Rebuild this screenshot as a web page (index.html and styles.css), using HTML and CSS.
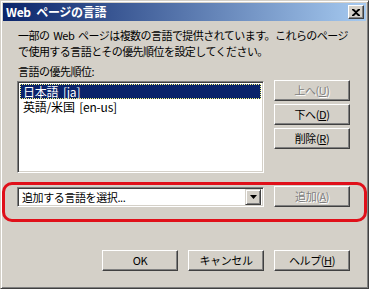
FILE: index.html
```html
<!DOCTYPE html>
<html lang="ja">
<head>
<meta charset="utf-8">
<title>Web ページの言語</title>
<link rel="stylesheet" href="styles.css">
</head>
<body>
<div class="dialog">
  <div class="titlebar">
    <span class="title">Web ページの言語</span>
    <span class="close"><svg width="8" height="7" viewBox="0 0 8 7"><path d="M0 0h2l2 2 2-2h2v1L5 3.5 8 6v1H6L4 5 2 7H0V6l3-2.5L0 1z" fill="#000"/></svg></span>
  </div>
  <div class="content">
    <p class="desc">一部の Web ページは複数の言語で提供されています。これらのページ<br>で使用する言語とその優先順位を設定してください。</p>
    <div class="label">言語の優先順位:</div>
    <div class="main">
      <div class="listbox">
        <div class="item selected"><span>日本語 [ja]</span></div>
        <div class="item"><span>英語/米国 [en-us]</span></div>
      </div>
      <div class="side">
        <button class="btn disabled">上へ(<u>U</u>)</button>
        <button class="btn">下へ(<u>D</u>)</button>
        <button class="btn">削除(<u>R</u>)</button>
      </div>
    </div>
    <div class="addrow">
      <div class="combo">
        <span class="combo-text">追加する言語を選択...</span>
        <span class="combo-arrow"><svg width="7" height="4" viewBox="0 0 7 4"><path d="M0 0h7L3.5 4z" fill="#000"/></svg></span>
      </div>
      <button class="btn disabled">追加(<u>A</u>)</button>
    </div>
    <div class="footer">
      <button class="btn">OK</button>
      <button class="btn">キャンセル</button>
      <button class="btn">ヘルプ(<u>H</u>)</button>
    </div>
  </div>
  <div class="highlight"></div>
</div>
</body>
</html>
```
FILE: styles.css
```css
html, body {
  margin: 0;
  padding: 0;
  background: #d4d0c8;
}
body {
  font-family: "Noto Sans CJK JP", "DejaVu Sans", sans-serif;
  font-size: 11px;
  color: #000;
}
.dialog {
  position: relative;
  width: 369px;
  height: 289px;
  box-sizing: border-box;
  border-top: 1px solid #d4d0c8;
  border-left: 1px solid #d4d0c8;
  border-right: 1px solid #404040;
  border-bottom: 1px solid #404040;
  box-shadow: inset 1px 1px 0 #ffffff, inset -1px -1px 0 #808080;
  padding: 2px;
  background: #d4d0c8;
  display: flex;
  flex-direction: column;
}
.titlebar {
  height: 18px;
  background: linear-gradient(to right, #0a246a, #a6caf0);
  display: flex;
  align-items: center;
  justify-content: space-between;
  padding: 0 2px 0 3px;
}
.title {
  color: #fff;
  font-weight: bold;
  font-size: 12px;
  line-height: 18px;
  letter-spacing: -0.3px;
  word-spacing: 3px;
}
.close {
  width: 16px;
  height: 14px;
  box-sizing: border-box;
  background: #d4d0c8;
  border-top: 1px solid #fff;
  border-left: 1px solid #fff;
  border-right: 1px solid #404040;
  border-bottom: 1px solid #404040;
  box-shadow: inset -1px -1px 0 #808080;
  display: flex;
  align-items: center;
  justify-content: center;
}
.content {
  padding: 6px 16px 0 14px;
  display: flex;
  flex-direction: column;
  flex: 1;
}
.desc {
  margin: 0 0 0 1px;
  line-height: 16px;
  font-size: 11px;
  letter-spacing: -0.55px;
  word-spacing: 2px;
  white-space: nowrap;
}
.label {
  margin: 5px 0 0 1px;
  line-height: 14px;
  letter-spacing: -0.5px;
}
.main {
  display: flex;
  gap: 10px;
  margin-top: 2px;
}
.listbox {
  width: 248px;
  height: 92px;
  box-sizing: border-box;
  background: #fff;
  border-top: 1px solid #808080;
  border-left: 1px solid #808080;
  border-right: 1px solid #fff;
  border-bottom: 1px solid #fff;
  box-shadow: inset 1px 1px 0 #404040, inset -1px -1px 0 #d4d0c8;
  padding: 2px;
  margin-top: 1px;
}
.item {
  height: 15px;
  line-height: 15px;
  padding-left: 3px;
  white-space: nowrap;
  font-size: 12px;
  letter-spacing: -0.2px;
  word-spacing: 2px;
}
.item.selected {
  background: #0a246a;
  color: #fff;
  outline: 1px dotted #ffff80;
  outline-offset: -1px;
}
.side {
  display: flex;
  flex-direction: column;
  gap: 3px;
}
.btn {
  width: 76px;
  height: 21px;
  box-sizing: border-box;
  background: #d4d0c8;
  border-top: 1px solid #fff;
  border-left: 1px solid #fff;
  border-right: 1px solid #404040;
  border-bottom: 1px solid #404040;
  box-shadow: inset -1px -1px 0 #808080;
  font-family: "Noto Sans CJK JP", "DejaVu Sans", sans-serif;
  font-size: 11px;
  line-height: 17px;
  padding: 0;
  color: #000;
  letter-spacing: -0.4px;
}
.btn.disabled {
  color: #808080;
  text-shadow: 1px 1px 0 #fff;
}
.addrow {
  display: flex;
  gap: 10px;
  align-items: center;
  margin-top: 13px;
}
.combo {
  width: 248px;
  height: 20px;
  box-sizing: border-box;
  background: #fff;
  border-top: 1px solid #808080;
  border-left: 1px solid #808080;
  border-right: 1px solid #fff;
  border-bottom: 1px solid #fff;
  box-shadow: inset 1px 1px 0 #404040, inset -1px -1px 0 #d4d0c8;
  display: flex;
  align-items: center;
  justify-content: space-between;
  padding: 2px;
}
.combo-text {
  padding-left: 2px;
  line-height: 14px;
  font-size: 11px;
  letter-spacing: -0.4px;
}
.combo-arrow {
  width: 16px;
  height: 16px;
  box-sizing: border-box;
  background: #d4d0c8;
  border-top: 1px solid #d4d0c8;
  border-left: 1px solid #d4d0c8;
  border-right: 1px solid #404040;
  border-bottom: 1px solid #404040;
  box-shadow: inset 1px 1px 0 #fff, inset -1px -1px 0 #808080;
  display: flex;
  align-items: center;
  justify-content: center;
}
.footer {
  display: flex;
  justify-content: flex-end;
  gap: 10px;
  margin-top: 43px;
}
.highlight {
  position: absolute;
  left: 1px;
  top: 181px;
  width: 365px;
  height: 40px;
  box-sizing: border-box;
  border: 3px solid #e0101a;
  border-radius: 10px;
  pointer-events: none;
}
```
